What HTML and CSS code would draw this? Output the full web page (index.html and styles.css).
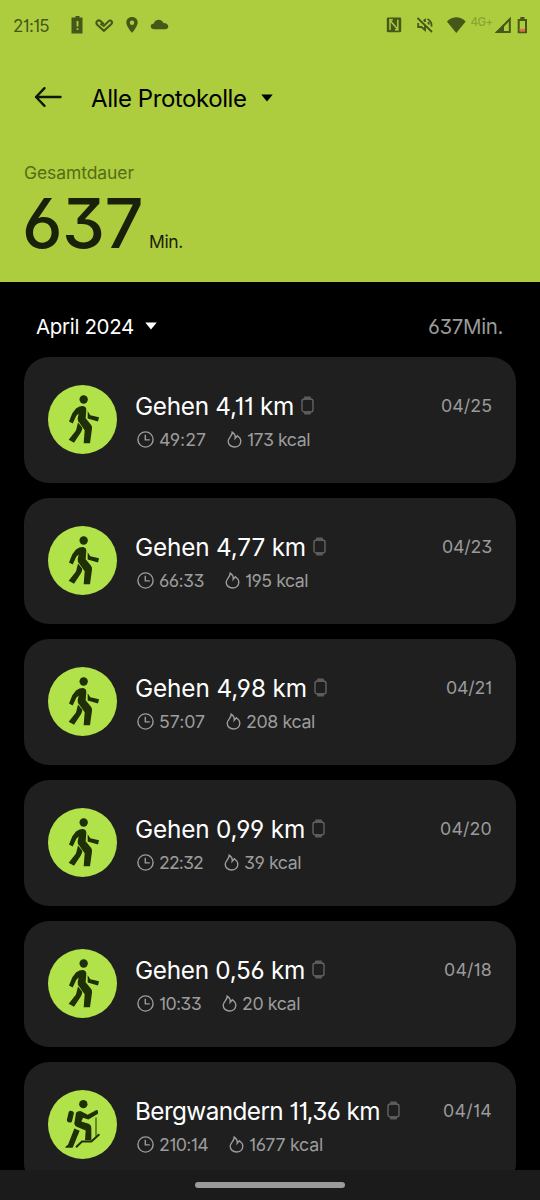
FILE: index.html
```html
<!DOCTYPE html>
<html lang="de">
<head>
<meta charset="utf-8">
<title>Alle Protokolle</title>
<link rel="stylesheet" href="styles.css">
</head>
<body>
<svg class="defs" width="0" height="0">
  <symbol id="walk" viewBox="24 16.5 207 207">
    <circle cx="131" cy="60" r="12.5"/>
    <path d="M108 87Q121 78 132 80Q139 82 139 90L137 116L153 136Q157 141 156 148L150 191H131L134 152L118 130Q112 123 113 116L116 102L109 109L98 132L87 126L97 101Z"/>
    <path d="M143 95L151 107L177 113L174 126L143 117Z"/>
    <path d="M114 129L127 145Q127 153 122 160L102 190L86 181L108 153Z"/>
  </symbol>
  <symbol id="hike" viewBox="24 16.5 207 207">
    <circle cx="130" cy="59" r="12.5"/>
    <rect x="83" y="79" width="16" height="35" rx="6" transform="rotate(13 91 97)"/>
    <path d="M108 85Q113 79 123 80L143 91L168 77Q174 75 174 82V88L145 105L129 100L124 111L146 118Q154 121 154 130V167H135L137 138L110 127Q100 121 104 110Z"/>
    <path d="M103 132L119 139L98 190H76L77 186L84 181Z"/>
    <path class="pole" d="M168 99V154"/>
    <path class="ski" d="M108 188L126 171H154L178 149"/>
  </symbol>
  <symbol id="clock" viewBox="0 0 17 17"><circle cx="8.5" cy="8.5" r="7.6"/><path d="M8.3 3.8V8.9H12.8"/></symbol>
  <symbol id="flame" viewBox="0 0 15 17"><path d="M5.2 1.2C7.4 2.6 8.6 4.5 8.2 7.3L10.4 4.8C12.7 6.5 13.8 8.1 13.8 10.2C13.8 13.7 11 16 7.5 16S1.2 13.6 1.2 10.3C1.2 6.7 5.3 5.3 5.2 1.2Z"/></symbol>
  <symbol id="watch" viewBox="0 0 13 19"><rect x="1" y="3" width="11" height="13" rx="2.6"/><path class="strap" d="M3.4 .6H9.6L10.4 3.8H2.6ZM2.6 15.2H10.4L9.6 18.4H3.4Z"/></symbol>
</svg>
<div class="screen">
  <header class="hero">
    <div class="status">
      <span class="time" data-width="36">21:15</span>
      <svg class="status-left" width="100" height="20" viewBox="0 0 100 20">
        <path d="M3 2.5H5.5V1H9.5V2.5H12.5V18.5H1.5V2.5ZM6.6 6V11.5H8.4V6ZM6.6 13.2V15H8.4V13.2Z" fill-rule="evenodd"/>
        <path class="line" transform="translate(-.8 -.6)" d="M31.2 9.2L34.6 11.6L39 7.2Q40.8 5.2 42.3 6.7Q43.6 8.2 42 9.9L34.7 16.4L28 10.3Q26.3 8.3 27.9 6.7Q29.8 5.2 31.5 6.8L34.6 9.6"/>
        <path d="M62 2C58.5 2 56.3 4.4 56.3 7.6C56.3 11.6 62 18 62 18S67.7 11.6 67.7 7.6C67.7 4.4 65.5 2 62 2ZM62 5.5A2.2 2.2 0 1 1 62 9.9A2.2 2.2 0 1 1 62 5.5Z" fill-rule="evenodd"/>
        <path d="M84.5 14.2C79.8 14.2 79.3 8.9 83.8 8.4C85.3 3.8 91.6 3.6 93.4 8.1C99.3 8 99.8 14.2 95.4 14.2Z"/>
      </svg>
      <span class="fill"></span>
      <svg class="status-right" width="82" height="20" viewBox="0 0 82 20">
        <path d="M2 2.5H14Q15.2 2.5 15.2 3.7V16Q15.2 17.3 14 17.3H2Q.8 17.3 .8 16V3.7Q.8 2.5 2 2.5Z"/>
        <path class="cut" d="M4 15V5.2L11.8 14.5V4.8M6.8 4.7H4M11.8 14.8H9"/>
        <path class="line thin" d="M31.5 3L46 17M32.2 8V12H35.5L39 15V11M37.5 5.7L39 4.8V7M41.5 4Q46.3 6.7 45.5 11.7M41.8 7.3Q43 8.2 43 9.5"/>
        <path d="M70.3 18L60.9 6.4Q70.3 -1.8 79.7 6.4Z"/>
      </svg>
      <span class="network" data-width="22">4G+</span>
      <svg class="signal" width="34" height="20" viewBox="0 0 34 20">
        <path class="line" d="M3.2 17L15.8 4.2V17Z"/><path d="M1 18L10 9V18Z"/>
        <path class="line" d="M24.7 5H32V17.3H24.7Z"/><path d="M26.3 2H30.5V5H26.3Z"/>
        <path class="low" d="M25.7 13.8H31V16.5H25.7Z"/>
      </svg>
    </div>
    <div class="appbar">
      <svg class="back" width="28" height="22" viewBox="0 0 28 22"><path d="M26.5 11H2M10.5 2.2L2 11L10.5 19.8"/></svg>
      <span class="heading" data-width="155.5">Alle Protokolle</span>
      <svg class="caret" width="12" height="8" viewBox="0 0 12 8"><path d="M.3 .5H11.7L6 7.5Z"/></svg>
    </div>
    <div class="total">
      <div class="total-label"><span data-width="110">Gesamtdauer</span></div>
      <div class="total-value"><span class="number" data-width="121">637</span><span class="unit" data-width="34">Min.</span></div>
    </div>
  </header>
  <main>
    <div class="month">
      <span data-width="98">April 2024</span>
      <svg class="caret" width="12" height="8" viewBox="0 0 12 8"><path d="M.3 .5H11.7L6 7.5Z"/></svg>
      <span class="fill"></span>
      <span class="month-sum" data-width="75">637Min.</span>
    </div>
    <div class="list" id="list"></div>
  </main>
  <footer class="nav"><span class="pill"></span></footer>
</div>
<script src="app.js"></script>
</body>
</html>
```
FILE: styles.css
```css
* { box-sizing: border-box; }
body { margin: 0; background: #000; }
.screen {
  width: 540px; height: 1200px; overflow: hidden;
  display: flex; flex-direction: column;
  font-family: Inter, "Open Sans", sans-serif;
  font-feature-settings: "cv01", "cv03", "cv04", "cv09", "calt" 0;
  color: #fff; background: #000;
}
.defs { display: block; position: absolute; }
svg { display: block; flex: none; }
[data-width] { display: inline-block; white-space: nowrap; flex: none; }
.fill { flex: 1; }

.hero { height: 282px; flex: none; background: #adcd3e; color: #000; }
.status { height: 50px; padding: 0 12px 0 13px; display: flex; align-items: center; color: #46571a; fill: #46571a; }
.time { font-size: 17px; line-height: 20px; padding-top: 1px; }
.status-left { margin-left: 20.5px; }
.status .line { fill: none; stroke: #46571a; stroke-width: 2; }
.status .thin { stroke-width: 1.8; }
.status .cut { fill: none; stroke: #adcd3e; stroke-width: 1.5; }
.status .low { fill: #f0664a; }
.network { font-size: 11.5px; font-weight: 500; color: #8ba332; margin-left: 2.5px; line-height: 16px; margin-top: -7px; }
.signal { margin-left: 1.5px; }
.appbar { height: 96px; display: flex; align-items: center; padding: 1px 0 0 34px; }
.back { fill: none; stroke: #101800; stroke-width: 2.4; margin-top: -3px; stroke-linecap: round; stroke-linejoin: round; }
.heading { font-size: 24px; line-height: 30px; margin-left: 29px; }
.caret { fill: currentColor; margin-left: 14px; }
.appbar .caret { margin-top: -2px; }
.total { padding: 14px 24px 0; }
.total-label { font-size: 17.5px; line-height: 25px; height: 29px; color: #566b16; }
.total-value { display: flex; align-items: baseline; line-height: 69px; color: #1a210b; }
.number { font-size: 68.5px; font-weight: 550; margin-left: -2px; }
.unit { font-size: 17.5px; margin-left: 6px; }

.month { height: 75px; padding: 13px 37px 0 36px; display: flex; align-items: center; font-size: 20.5px; }
.month .caret { margin-left: 10.5px; margin-top: -1px; }
.month-sum { color: #9a9a9a; }
.list { display: flex; flex-direction: column; gap: 15px; padding: 0 24px; }
main { flex: 1; min-height: 0; overflow: hidden; }
.card { height: 126px; flex: none; display: flex; padding: 0 24px; border-radius: 25px; background: #1f1f1f; }
.badge { width: 69px; height: 69px; margin-top: 28.4px; border-radius: 50%; background: #b1e24a; fill: #1f3006; flex: none; }
.pole, .ski { fill: none; stroke: #1f3006; stroke-width: 6; }
.pole { stroke-width: 3; }
.body { flex: 1; margin-left: 18px; padding-top: 33.5px; }
.title { display: flex; height: 30px; line-height: 30px; font-size: 24.3px; }
.watch { width: 13px; height: 19px; margin: 5px 0 0 7px; fill: none; stroke: #626262; stroke-width: 1.4; }
.strap { fill: #5c5c5c; stroke: none; }
.meta { display: flex; align-items: center; height: 22px; margin-top: 8px; font-size: 17.8px; line-height: 22px; color: #9c9c9c; fill: none; stroke: #9c9c9c; stroke-width: 1.4; }
.meta-clock { width: 17px; height: 17px; margin: 0 5px 0 2px; }
.meta-flame { width: 15px; height: 17px; margin: 0 5.5px 0 20.5px; }
.date { margin-top: 33.5px; height: 30px; line-height: 30px; font-size: 17.8px; color: #9a9a9a; }
.nav { height: 30px; flex: none; background: #1b1b1b; display: flex; justify-content: center; padding-top: 12px; }
.pill { width: 150px; height: 6px; border-radius: 3px; background: #9b9b9b; }
```
FILE: app.js
```js
const entries = [
  { icon: "walk", title: ["Gehen 4,11 km", 159], time: ["49:27", 47], kcal: ["173 kcal", 63], date: ["04/25", 51] },
  { icon: "walk", title: ["Gehen 4,77 km", 171], time: ["66:33", 45], kcal: ["195 kcal", 63], date: ["04/23", 50] },
  { icon: "walk", title: ["Gehen 4,98 km", 172], time: ["57:07", 46], kcal: ["208 kcal", 69], date: ["04/21", 46] },
  { icon: "walk", title: ["Gehen 0,99 km", 170], time: ["22:32", 44], kcal: ["39 kcal", 57], date: ["04/20", 52] },
  { icon: "walk", title: ["Gehen 0,56 km", 170], time: ["10:33", 42], kcal: ["20 kcal", 58], date: ["04/18", 48] },
  { icon: "hike", title: ["Bergwandern 11,36 km", 245], time: ["210:14", 49], kcal: ["1677 kcal", 74], date: ["04/14", 49] }
];

const label = ([text, width], cls = "") => `<span class="${cls}" data-width="${width}">${text}</span>`;

document.getElementById("list").innerHTML = entries.map(e => `
  <article class="card">
    <svg class="badge"><use href="#${e.icon}"/></svg>
    <div class="body">
      <div class="title">${label(e.title)}<svg class="watch"><use href="#watch"/></svg></div>
      <div class="meta">
        <svg class="meta-clock"><use href="#clock"/></svg>${label(e.time)}
        <svg class="meta-flame"><use href="#flame"/></svg>${label(e.kcal)}
      </div>
    </div>
    ${label(e.date, "date")}
  </article>`).join("");

// Spread the letters of each label over its column width.
function fitLabels() {
  document.querySelectorAll("[data-width]").forEach(el => {
    const width = Number(el.dataset.width);
    const natural = el.getBoundingClientRect().width;
    el.style.letterSpacing = (width - natural) / el.textContent.length + "px";
    el.style.width = width + "px";
  });
}
fitLabels();
```
